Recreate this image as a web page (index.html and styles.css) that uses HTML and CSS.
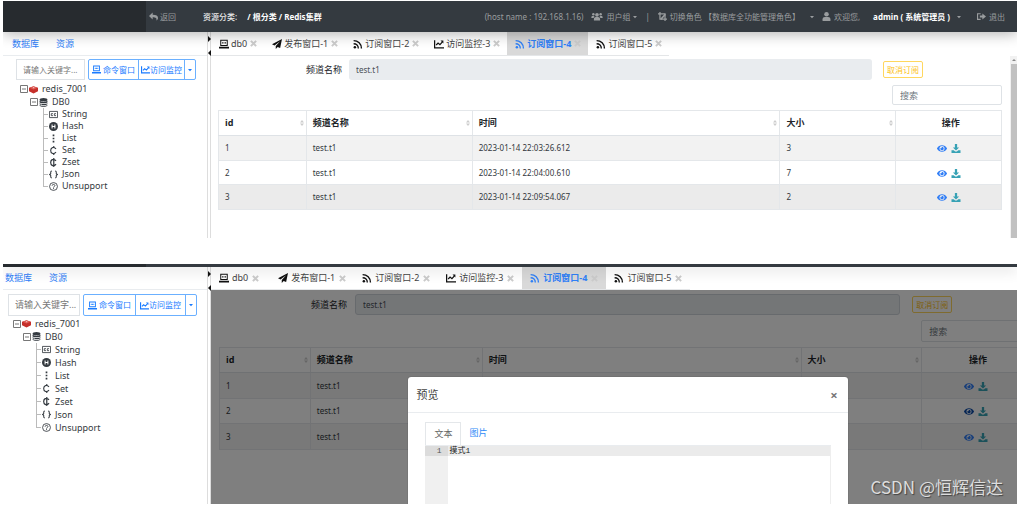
FILE: index.html
```html
<!DOCTYPE html>
<html lang="zh-CN">
<head>
<meta charset="utf-8">
<title>Redis集群</title>
<link rel="stylesheet" href="styles.css">
</head>
<body>
<svg class="sprite" aria-hidden="true">
  <symbol id="i-eye" viewBox="0 0 576 512"><path d="M572.52 241.4C518.29 135.59 410.93 64 288 64S57.68 135.64 3.48 241.41a32.35 32.35 0 0 0 0 29.19C57.71 376.41 165.07 448 288 448s230.32-71.64 284.52-177.41a32.35 32.35 0 0 0 0-29.19zM288 400a144 144 0 1 1 144-144 143.93 143.93 0 0 1-144 144zm0-240a95.31 95.31 0 0 0-25.31 3.79 47.85 47.85 0 0 1-66.9 66.9A95.78 95.78 0 1 0 288 160z"/></symbol>
  <symbol id="i-down" viewBox="0 0 16 16"><path d="M6 0h4v6H13.500L8 11.500 2.500 6H6zM0 11h4l2.500 2.300h3L12 11h4v5H0z"/></symbol>
  <symbol id="i-pc" viewBox="0 0 16 16"><path fill-rule="evenodd" d="M2 1h12v10H2zM3.600 2.600v6.800h8.800V2.600zM0 12.500h16V15H0z"/><path d="M5 5h1.500v2H5zM7.300 5h1.500v2H7.300zM9.600 5h1.500v2H9.600z"/></symbol>
  <symbol id="i-plane" viewBox="0 0 16 16"><path d="M16 0 0 8.500l4 2L13 3.500 6 11.200V16l3-3.200 4 1.700z"/></symbol>
  <symbol id="i-rss" viewBox="0 0 16 16"><path fill="none" stroke="currentColor" stroke-width="2.200" d="M1 2.500C8 2.500 13.500 8 13.500 15M1 7.500c4.500 0 7.500 3 7.500 7.500"/><circle cx="3" cy="13" r="2"/></symbol>
  <symbol id="i-chart" viewBox="0 0 16 16"><path fill="none" stroke="currentColor" stroke-width="2" d="M1 2v12h15M3.500 9.500l3-3 3 2.500 4-4.500"/><path d="M10.500 2.500H15V7z"/></symbol>
  <symbol id="i-x" viewBox="0 0 16 16"><path fill="none" stroke="currentColor" stroke-width="4.500" d="m2 2 12 12M14 2 2 14"/></symbol>
  <symbol id="i-reply" viewBox="0 0 16 16"><path d="M6.500 1v4C13 5 16 7 16 10.500c0 2-1 3.500-3 4.500 1.500-4-1-5.500-6.500-5.500v4L0 7.300z"/></symbol>
  <symbol id="i-users" viewBox="0 0 20 16"><circle cx="10" cy="5" r="3.300"/><circle cx="3.500" cy="4" r="2.200"/><circle cx="16.500" cy="4" r="2.200"/><path d="M4.500 15v-2.500c0-2 1.500-3.500 3.500-3.500h4c2 0 3.500 1.500 3.500 3.500V15zM0 10.500V9c0-1.200 1-2 2-2h3.500L4 10.500zM20 10.500V9c0-1.200-1-2-2-2h-3.500L16 10.500z"/></symbol>
  <symbol id="i-user" viewBox="0 0 16 16"><circle cx="8" cy="4" r="4"/><path d="M1 16v-3c0-2.500 2-4 4-4h6c2 0 4 1.500 4 4v3z"/></symbol>
  <symbol id="i-swap" viewBox="0 0 16 16"><path fill="none" stroke="currentColor" stroke-width="2.200" d="M3.500 0v12.500H16M0 3.500h12.500V16"/><path d="m4 12 8-9 2 2-8 9z"/></symbol>
  <symbol id="i-out" viewBox="0 0 16 16"><path fill="none" stroke="currentColor" stroke-width="2" d="M6.500 3H1v10h5.500"/><path d="M9.500 2.500 16 8l-6.500 5.500v-3.700H5V6.200h4.500z"/></symbol>
  <symbol id="i-caret" viewBox="0 0 8 8"><path d="M0 2h8L4 6.500z"/></symbol>
  <symbol id="i-sort" viewBox="0 0 8 16"><path d="M0 7h8L4 2zM0 9h8l-4 5z"/></symbol>
  <symbol id="i-up" viewBox="0 0 8 8"><path d="M0 6h8L4 2z"/></symbol>
  <symbol id="i-right" viewBox="0 0 4 8"><path d="M0 0v8l4-4z"/></symbol>
  <symbol id="i-left" viewBox="0 0 4 8"><path d="M4 0v8L0 4z"/></symbol>
  <symbol id="i-minus" viewBox="0 0 8 8"><path fill="#fff" stroke="#777" d="M.5.5h7v7h-7zM2 4h4"/></symbol>
  <symbol id="i-redis" viewBox="0 0 16 16"><path fill="#c6302b" d="m8 2 8 3v6l-8 4-8-4V5z"/><path fill="#e0605a" d="m8 2.500 7 2.600L8 8 1 5.100z"/><path fill="#fff" d="m7 4 3 .7-2.500 1.200z"/></symbol>
  <symbol id="i-db" viewBox="0 0 16 16"><ellipse cx="8" cy="3" rx="7" ry="2.800"/><path d="M1 5c2 2 12 2 14 0v3c-2 2-12 2-14 0zM1 9.300c2 2 12 2 14 0v2c-2 2-12 2-14 0zM1 12.600c2 2 12 2 14 0v.9c-1 3-13 3-14 0z"/></symbol>
  <symbol id="i-string" viewBox="0 0 16 16"><path fill="none" stroke="currentColor" stroke-width="1.500" d="M.8 2.500h14.400v11H.8zM7 6.500H4v3.500h3M12.500 6.500h-3v3.500h3"/></symbol>
  <symbol id="i-hash" viewBox="0 0 16 16"><circle cx="8" cy="8" r="8"/><path fill="none" stroke="#fff" stroke-width="1.800" d="M5.500 4.500v7M10.500 4.500v7M5.500 8h5"/></symbol>
  <symbol id="i-list" viewBox="0 0 16 16"><path d="M6.500 1h3v3h-3zM6.500 6.500h3v3h-3zM6.500 12h3v3h-3z"/></symbol>
  <symbol id="i-set" viewBox="0 0 16 16"><path fill="none" stroke="currentColor" stroke-width="2" d="M12.500 5C7-.5 3 4 3 8s4 8.500 9.500 3M8.500 0v3M8.500 13v3"/></symbol>
  <symbol id="i-zset" viewBox="0 0 16 16"><path fill="none" stroke="currentColor" stroke-width="2.200" d="M12.500 5C7-.5 3 4 3 8s4 8.500 9.500 3M8.500 0v16"/></symbol>
  <symbol id="i-json" viewBox="0 0 16 16"><path fill="none" stroke="currentColor" stroke-width="1.800" d="M5 2C2 2 3.500 5 3 6.500L1 8l2 1.500C3.500 11 2 14 5 14M11 2c3 0 1.500 3 2 4.500L15 8l-2 1.500c-.5 1.500 1 4.500-2 4.500"/></symbol>
  <symbol id="i-help" viewBox="0 0 16 16"><circle cx="8" cy="8" r="7" fill="none" stroke="currentColor" stroke-width="1.500"/><path fill="none" stroke="currentColor" stroke-width="1.600" d="M5.500 6.500c0-3 5-3 5 0C10.500 8 8 8 8 10M8 11v1.700"/></symbol>
</svg>

<section class="app app-list">
  <header class="topbar">
    <div class="brand"></div>
    <a class="back" href="#"><svg class="icon"><use href="#i-reply"/></svg>返回</a>
    <nav class="crumbs">资源分类: <b>/ 根分类 / Redis集群</b></nav>
    <div class="menu">
      <span>(host name : 192.168.1.16)</span>
      <button class="menu-item"><svg class="icon wide"><use href="#i-users"/></svg>用户组<svg class="caret"><use href="#i-caret"/></svg></button>
      <span>|</span>
      <button class="menu-item roles"><svg class="icon"><use href="#i-swap"/></svg><span>切换角色 【数据库全功能管理角色】</span><svg class="caret"><use href="#i-caret"/></svg></button>
      <button class="menu-item"><svg class="icon"><use href="#i-user"/></svg>欢迎您,<b>admin ( 系统管理员 )</b><svg class="caret"><use href="#i-caret"/></svg></button>
      <a class="menu-item exit" href="#"><svg class="icon"><use href="#i-out"/></svg>退出</a>
    </div>
  </header>
  <div class="body">
    <aside class="side">
      <nav class="side-tabs"><a href="#">数据库</a><a href="#">资源</a></nav>
      <div class="tools">
        <input class="key" type="text" placeholder="请输入关键字..." aria-label="关键字">
        <div class="group">
          <button><svg class="icon"><use href="#i-pc"/></svg>命令窗口</button><button><svg class="icon"><use href="#i-chart"/></svg>访问监控</button><button class="more" aria-label="更多"><svg class="caret"><use href="#i-caret"/></svg></button>
        </div>
      </div>
      <ul class="tree">
        <li class="root"><svg class="box"><use href="#i-minus"/></svg><svg class="icon"><use href="#i-redis"/></svg>redis_7001</li>
        <li class="db"><svg class="box"><use href="#i-minus"/></svg><svg class="icon"><use href="#i-db"/></svg>DB0</li>
        <li class="leaf"><svg class="icon"><use href="#i-string"/></svg>String</li>
        <li class="leaf"><svg class="icon"><use href="#i-hash"/></svg>Hash</li>
        <li class="leaf"><svg class="icon"><use href="#i-list"/></svg>List</li>
        <li class="leaf"><svg class="icon"><use href="#i-set"/></svg>Set</li>
        <li class="leaf"><svg class="icon"><use href="#i-zset"/></svg>Zset</li>
        <li class="leaf"><svg class="icon"><use href="#i-json"/></svg>Json</li>
        <li class="leaf"><svg class="icon"><use href="#i-help"/></svg>Unsupport</li>
      </ul>
    </aside>
    <div class="splitter"><svg><use href="#i-right"/></svg><svg><use href="#i-left"/></svg></div>
    <main class="main">
      <nav class="tabs">
        <a href="#"><svg class="icon"><use href="#i-pc"/></svg>db0<svg class="close"><use href="#i-x"/></svg></a>
        <a href="#"><svg class="icon"><use href="#i-plane"/></svg>发布窗口-1<svg class="close"><use href="#i-x"/></svg></a>
        <a href="#"><svg class="icon"><use href="#i-rss"/></svg>订阅窗口-2<svg class="close"><use href="#i-x"/></svg></a>
        <a href="#"><svg class="icon"><use href="#i-chart"/></svg>访问监控-3<svg class="close"><use href="#i-x"/></svg></a>
        <a class="active" href="#"><svg class="icon"><use href="#i-rss"/></svg>订阅窗口-4<svg class="close"><use href="#i-x"/></svg></a>
        <a href="#"><svg class="icon"><use href="#i-rss"/></svg>订阅窗口-5<svg class="close"><use href="#i-x"/></svg></a>
      </nav>
      <div class="pane">
        <div class="content">
          <div class="form">
            <label for="channel-a">频道名称</label>
            <input id="channel-a" type="text" value="test.t1" readonly>
            <button class="cancel">取消订阅</button>
          </div>
          <input class="search" type="text" placeholder="搜索" aria-label="搜索">
          <table class="grid">
            <colgroup><col class="c-id"><col class="c-name"><col class="c-time"><col class="c-size"><col class="c-act"></colgroup>
            <thead><tr>
              <th><div class="head">id<svg><use href="#i-sort"/></svg></div></th>
              <th><div class="head">频道名称<svg><use href="#i-sort"/></svg></div></th>
              <th><div class="head">时间<svg><use href="#i-sort"/></svg></div></th>
              <th><div class="head">大小<svg><use href="#i-sort"/></svg></div></th>
              <th class="act">操作</th>
            </tr></thead>
            <tbody>
              <tr><td>1</td><td>test.t1</td><td>2023-01-14 22:03:26.612</td><td>3</td><td class="act"><a class="view" href="#" aria-label="预览"><svg><use href="#i-eye"/></svg></a><a class="load" href="#" aria-label="下载"><svg><use href="#i-down"/></svg></a></td></tr>
              <tr><td>2</td><td>test.t1</td><td>2023-01-14 22:04:00.610</td><td>7</td><td class="act"><a class="view" href="#" aria-label="预览"><svg><use href="#i-eye"/></svg></a><a class="load" href="#" aria-label="下载"><svg><use href="#i-down"/></svg></a></td></tr>
              <tr class="hover"><td>3</td><td>test.t1</td><td>2023-01-14 22:09:54.067</td><td>2</td><td class="act"><a class="view" href="#" aria-label="预览"><svg><use href="#i-eye"/></svg></a><a class="load" href="#" aria-label="下载"><svg><use href="#i-down"/></svg></a></td></tr>
            </tbody>
          </table>
        </div>
        <div class="scrollbar"><svg><use href="#i-up"/></svg><div class="thumb"></div></div>
      </div>
    </main>
  </div>
</section>

<section class="app app-preview">
  <header class="topbar"><div class="brand"></div></header>
  <div class="body">
    <aside class="side">
      <nav class="side-tabs"><a href="#">数据库</a><a href="#">资源</a></nav>
      <div class="tools">
        <input class="key" type="text" placeholder="请输入关键字..." aria-label="关键字">
        <div class="group">
          <button><svg class="icon"><use href="#i-pc"/></svg>命令窗口</button><button><svg class="icon"><use href="#i-chart"/></svg>访问监控</button><button class="more" aria-label="更多"><svg class="caret"><use href="#i-caret"/></svg></button>
        </div>
      </div>
      <ul class="tree">
        <li class="root"><svg class="box"><use href="#i-minus"/></svg><svg class="icon"><use href="#i-redis"/></svg>redis_7001</li>
        <li class="db"><svg class="box"><use href="#i-minus"/></svg><svg class="icon"><use href="#i-db"/></svg>DB0</li>
        <li class="leaf"><svg class="icon"><use href="#i-string"/></svg>String</li>
        <li class="leaf"><svg class="icon"><use href="#i-hash"/></svg>Hash</li>
        <li class="leaf"><svg class="icon"><use href="#i-list"/></svg>List</li>
        <li class="leaf"><svg class="icon"><use href="#i-set"/></svg>Set</li>
        <li class="leaf"><svg class="icon"><use href="#i-zset"/></svg>Zset</li>
        <li class="leaf"><svg class="icon"><use href="#i-json"/></svg>Json</li>
        <li class="leaf"><svg class="icon"><use href="#i-help"/></svg>Unsupport</li>
      </ul>
    </aside>
    <div class="splitter"><svg><use href="#i-right"/></svg><svg><use href="#i-left"/></svg></div>
    <main class="main">
      <nav class="tabs">
        <a href="#"><svg class="icon"><use href="#i-pc"/></svg>db0<svg class="close"><use href="#i-x"/></svg></a>
        <a href="#"><svg class="icon"><use href="#i-plane"/></svg>发布窗口-1<svg class="close"><use href="#i-x"/></svg></a>
        <a href="#"><svg class="icon"><use href="#i-rss"/></svg>订阅窗口-2<svg class="close"><use href="#i-x"/></svg></a>
        <a href="#"><svg class="icon"><use href="#i-chart"/></svg>访问监控-3<svg class="close"><use href="#i-x"/></svg></a>
        <a class="active" href="#"><svg class="icon"><use href="#i-rss"/></svg>订阅窗口-4<svg class="close"><use href="#i-x"/></svg></a>
        <a href="#"><svg class="icon"><use href="#i-rss"/></svg>订阅窗口-5<svg class="close"><use href="#i-x"/></svg></a>
      </nav>
      <div class="pane">
        <div class="content">
          <div class="form">
            <label for="channel-b">频道名称</label>
            <input id="channel-b" type="text" value="test.t1" readonly>
            <button class="cancel">取消订阅</button>
          </div>
          <input class="search" type="text" placeholder="搜索" aria-label="搜索">
          <table class="grid">
            <colgroup><col class="c-id"><col class="c-name"><col class="c-time"><col class="c-size"><col class="c-act"></colgroup>
            <thead><tr>
              <th><div class="head">id<svg><use href="#i-sort"/></svg></div></th>
              <th><div class="head">频道名称<svg><use href="#i-sort"/></svg></div></th>
              <th><div class="head">时间<svg><use href="#i-sort"/></svg></div></th>
              <th><div class="head">大小<svg><use href="#i-sort"/></svg></div></th>
              <th class="act">操作</th>
            </tr></thead>
            <tbody>
              <tr><td>1</td><td>test.t1</td><td></td><td></td><td class="act"><a class="view" href="#" aria-label="预览"><svg><use href="#i-eye"/></svg></a><a class="load" href="#" aria-label="下载"><svg><use href="#i-down"/></svg></a></td></tr>
              <tr><td>2</td><td>test.t1</td><td></td><td></td><td class="act"><a class="view focus" href="#" aria-label="预览"><svg><use href="#i-eye"/></svg></a><a class="load" href="#" aria-label="下载"><svg><use href="#i-down"/></svg></a></td></tr>
              <tr><td>3</td><td>test.t1</td><td></td><td></td><td class="act"><a class="view" href="#" aria-label="预览"><svg><use href="#i-eye"/></svg></a><a class="load" href="#" aria-label="下载"><svg><use href="#i-down"/></svg></a></td></tr>
            </tbody>
          </table>
        </div>
        <div class="overlay">
          <div class="modal" role="dialog" aria-labelledby="modal-title">
            <div class="modal-head"><h2 id="modal-title">预览</h2><button class="dismiss" aria-label="关闭">×</button></div>
            <div class="modal-body">
              <nav class="views"><a class="on" href="#">文本</a><a href="#">图片</a></nav>
              <div class="editor">
                <div class="gutter"><span>1</span></div>
                <div class="code"><div class="line">摸式1</div></div>
              </div>
            </div>
          </div>
        </div>
        <div class="watermark">CSDN @恒辉信达</div>
      </div>
    </main>
  </div>
</section>
</body>
</html>
```

FILE: styles.css
```css
* { box-sizing: border-box; }

body {
  margin: 0;
  padding: 1px 1px 2px 3px;
  height: 100vh;
  display: flex;
  flex-direction: column;
  gap: 26px;
  background: #fff;
  color: #212529;
  font: 9px/12px "Noto Sans", "Noto Sans CJK SC", sans-serif;
  overflow: hidden;
}

a { color: inherit; text-decoration: none; }
button, input { font: inherit; color: inherit; margin: 0; padding: 0; border: 0; background: none; }
svg { fill: currentColor; display: block; flex: none; }
.sprite { position: absolute; width: 0; height: 0; }
.icon { width: 9px; height: 9px; }
.wide { width: 12px; }
.caret { width: 4px; height: 4px; }

/* one application window */
.app { display: flex; flex-direction: column; overflow: hidden; }
.app-list { --bar: 31px; --tab-pad: 7px; --tab-gap: 2px; --tabs: 24px; --row: 12px; --indent: 17px; }
.app-preview { --bar: 3px; --tab-pad: 8px; --tab-gap: 3px; --tabs: 23px; --row: 13px; --indent: 10px; flex: 1; min-height: 0; }

.topbar {
  position: relative;
  z-index: 2;
  flex: none;
  display: flex;
  align-items: center;
  height: var(--bar);
  background: #343a40;
  box-shadow: 0 2px 14px rgba(0, 0, 0, .3);
  color: #9a9d9f;
  font-size: 8px;
  white-space: nowrap;
}
.brand { align-self: stretch; width: 143px; background: #272b2f; }
.back { display: flex; align-items: center; gap: 2px; margin-left: 3px; }
.crumbs { margin-left: 27px; color: #e8e8e8; white-space: pre; font-weight: 500; }
.crumbs b { margin-left: 8px; color: #fff; }
.menu { margin-left: auto; padding-right: 12px; display: flex; align-items: center; gap: 8px; }
.menu-item { display: flex; align-items: center; gap: 3px; }
.menu-item b { color: #fff; margin: 0 4px 0 10px; }
.roles span { margin-right: 7px; }
.exit { margin-left: 8px; }

.body { flex: 1; display: flex; min-height: 0; }

/* sidebar */
.side { width: 204px; flex: none; }
.side-tabs {
  display: flex;
  align-items: center;
  gap: 17px;
  height: var(--tabs);
  padding-left: calc(var(--indent) - 8px);
  border-bottom: 1px solid #e9ecef;
  color: #2f80f7;
}
.tools { display: flex; gap: 3px; padding: 3px 11px 0 calc(var(--indent) - 4px); height: 24px; }
.app-preview .tools { padding: 4px 10px 0 5px; height: 26px; }
.key { flex: 1; min-width: 0; padding: 0 3px 0 6px; border: 1px solid #dee2e6; color: #6c757d; }
.app-list .key { font-size: 8px; }
.key::placeholder { color: #777; opacity: 1; }
.group { display: flex; border: 1px solid #6bb0ff; border-radius: 2px; color: #1a7bff; font-size: 8px; }
.group button { display: flex; align-items: center; justify-content: center; gap: 2px; padding: 0 3px; }
.group button + button { border-left: 1px solid #6bb0ff; gap: 0; padding: 0 2px; }
.app-preview .group button { padding: 0 4px; }
.app-list .group .more, .app-preview .group .more { padding: 0 3px; }

.tree { list-style: none; margin: 0; padding: 3px 0 0 var(--indent); }
.tree li { display: flex; align-items: center; height: var(--row); color: #343a40; }
.box { width: 8px; height: 8px; margin-right: 1px; }
.tree .icon { margin-right: 4px; }
.app-list .root { margin-bottom: 1px; }
.app-preview .tree { padding-top: 1px; }
.tree .db { margin-left: 10px; }
.tree .leaf { margin-left: 23px; }
.leaf::before { content: ""; width: 5px; height: 1px; margin-right: 1px; background: #bbb; }
.leaf { background: linear-gradient(#bbb, #bbb) left top / 1px 100% no-repeat; }
.leaf:last-child { background-size: 1px 50%; }

.splitter {
  width: 4px;
  flex: none;
  display: flex;
  flex-direction: column;
  align-items: center;
  gap: 8px;
  padding-top: 4px;
  border: solid #ddd;
  border-width: 0 1px;
  color: #111;
}
.splitter svg { width: 3px; height: 6px; }

/* main area */
.main { flex: 1; min-width: 0; display: flex; flex-direction: column; }
.tabs { display: flex; align-self: flex-start; height: var(--tabs); border-bottom: 1px solid #e4e6e8; color: #444; white-space: nowrap; }
.tabs a { display: flex; align-items: center; gap: var(--tab-gap); padding: 0 var(--tab-pad) 0 8px; }
.app-preview .tabs a:first-child { padding-right: 11px; }
.tabs .icon { width: 10px; height: 10px; color: #111; }
.tabs .close { width: 7px; height: 7px; margin-left: 1px; color: #ccc; }
.tabs .active { background: #d9d9d9; color: #2f80f7; font-weight: bold; }
.tabs .active .icon { color: inherit; }

.pane { position: relative; flex: 1; min-height: 0; display: flex; overflow: hidden; }
.content { flex: 1; padding: 3px 8px 28px 7px; }
.app-preview .content { flex: none; width: 103%; padding: 4px 10px 0 8px; }

.form { display: grid; grid-template-columns: 124px 1fr 123px; column-gap: 7px; align-items: center; }
.app-preview .form { grid-template-columns: 128px 1fr 123px; column-gap: 8px; }
.form label { text-align: right; }
.form input { min-width: 0; height: 21px; padding: 0 7px; border-radius: 3px; background: #e9ecef; color: #495057; font-size: 8px; }
.app-preview .form input { border: 1px solid #ced4da; }
.cancel { justify-self: start; height: 17px; margin-left: 4px; padding: 0 3px; border: 1px solid #ffd75e; border-radius: 2px; color: #fdbf14; font-size: 8px; }
.search { display: block; width: 110px; height: 20px; margin: 5px 0 5px auto; padding: 0 7px; border: 1px solid #dee2e6; border-radius: 2px; }
.app-preview .search { height: 22px; }
.search::placeholder { color: #6c757d; opacity: 1; }

.grid { width: 100%; table-layout: fixed; border-collapse: collapse; }
.c-id { width: 11.2%; }
.c-name { width: 21.2%; }
.c-time { width: 39.3%; }
.c-size { width: 14.8%; }
.c-act { width: 13.5%; }
.grid th, .grid td { height: 25px; padding: 0 6px; border: 1px solid #e4e7ea; text-align: left; }
.grid th { padding-right: 2px; border-bottom-color: #dee2e6; }
.grid td { font-size: 8px; color: #33383d; }
.app-list tr:nth-child(2) td { height: 24px; }
.app-preview tr:nth-child(odd) td { height: 26px; }
.head { display: flex; align-items: center; justify-content: space-between; }
.head svg { width: 4px; height: 8px; color: #ccc; }
.grid tbody tr:nth-child(odd) { background: #f2f2f2; }
.grid tbody .hover:nth-child(odd) { background: #ebebeb; }
.grid .act { text-align: center; }
.act a { display: inline-block; vertical-align: middle; margin: 0 2px; }
.act svg { width: 10px; height: 9px; }
.view { color: #2f7df6; }
.view.focus { color: #0a4aa8; }
.load { color: #37a2b5; }

.scrollbar { width: 7px; display: flex; flex-direction: column; align-items: center; gap: 2px; padding-top: 2px; background: #f1f1f1; color: #888; }
.scrollbar svg { width: 4px; height: 4px; }
.thumb { flex: 1; width: 6px; background: #c1c1c1; }

/* preview dialog over the dimmed content */
.overlay { position: absolute; inset: 0; display: flex; padding: 87px 21% 0 24.5%; background: rgba(0, 0, 0, .5); }
.modal { flex: 1; display: flex; flex-direction: column; background: #fff; border-radius: 3px 3px 0 0; box-shadow: 0 0 1px #333; }
.modal-head { display: flex; align-items: center; justify-content: space-between; height: 36px; padding: 0 10px 0 8px; border-bottom: 1px solid #e9ecef; }
.modal-head h2 { margin: 0; font-size: 11px; font-weight: normal; color: #444; }
.dismiss { font-size: 13px; font-weight: bold; color: #777; }
.modal-body { flex: 1; display: flex; flex-direction: column; padding: 9px 17px 0; }
.views { display: flex; border-bottom: 1px solid #e9ecef; color: #2f8af7; }
.views a { padding: 5px 8px; }
.views .on { border: 1px solid #e4e7ea; border-bottom: 0; color: #666; }
.editor { flex: 1; display: flex; border-right: 1px solid #eee; font: 8px/10px "Liberation Mono", "Noto Sans CJK SC", monospace; color: #222; }
.gutter { width: 23px; background: #f0f0f0; color: #555; }
.gutter span { display: block; padding-right: 7px; background: #dcdcdc; text-align: right; }
.code { flex: 1; }
.line { padding-left: 1px; background: #ebebeb; }

.watermark {
  position: absolute;
  right: 14px;
  bottom: 4px;
  color: #ddd;
  font: 17px/26px "Noto Sans CJK SC", sans-serif;
  text-shadow: 1px 1px 1px #444;
}
```
